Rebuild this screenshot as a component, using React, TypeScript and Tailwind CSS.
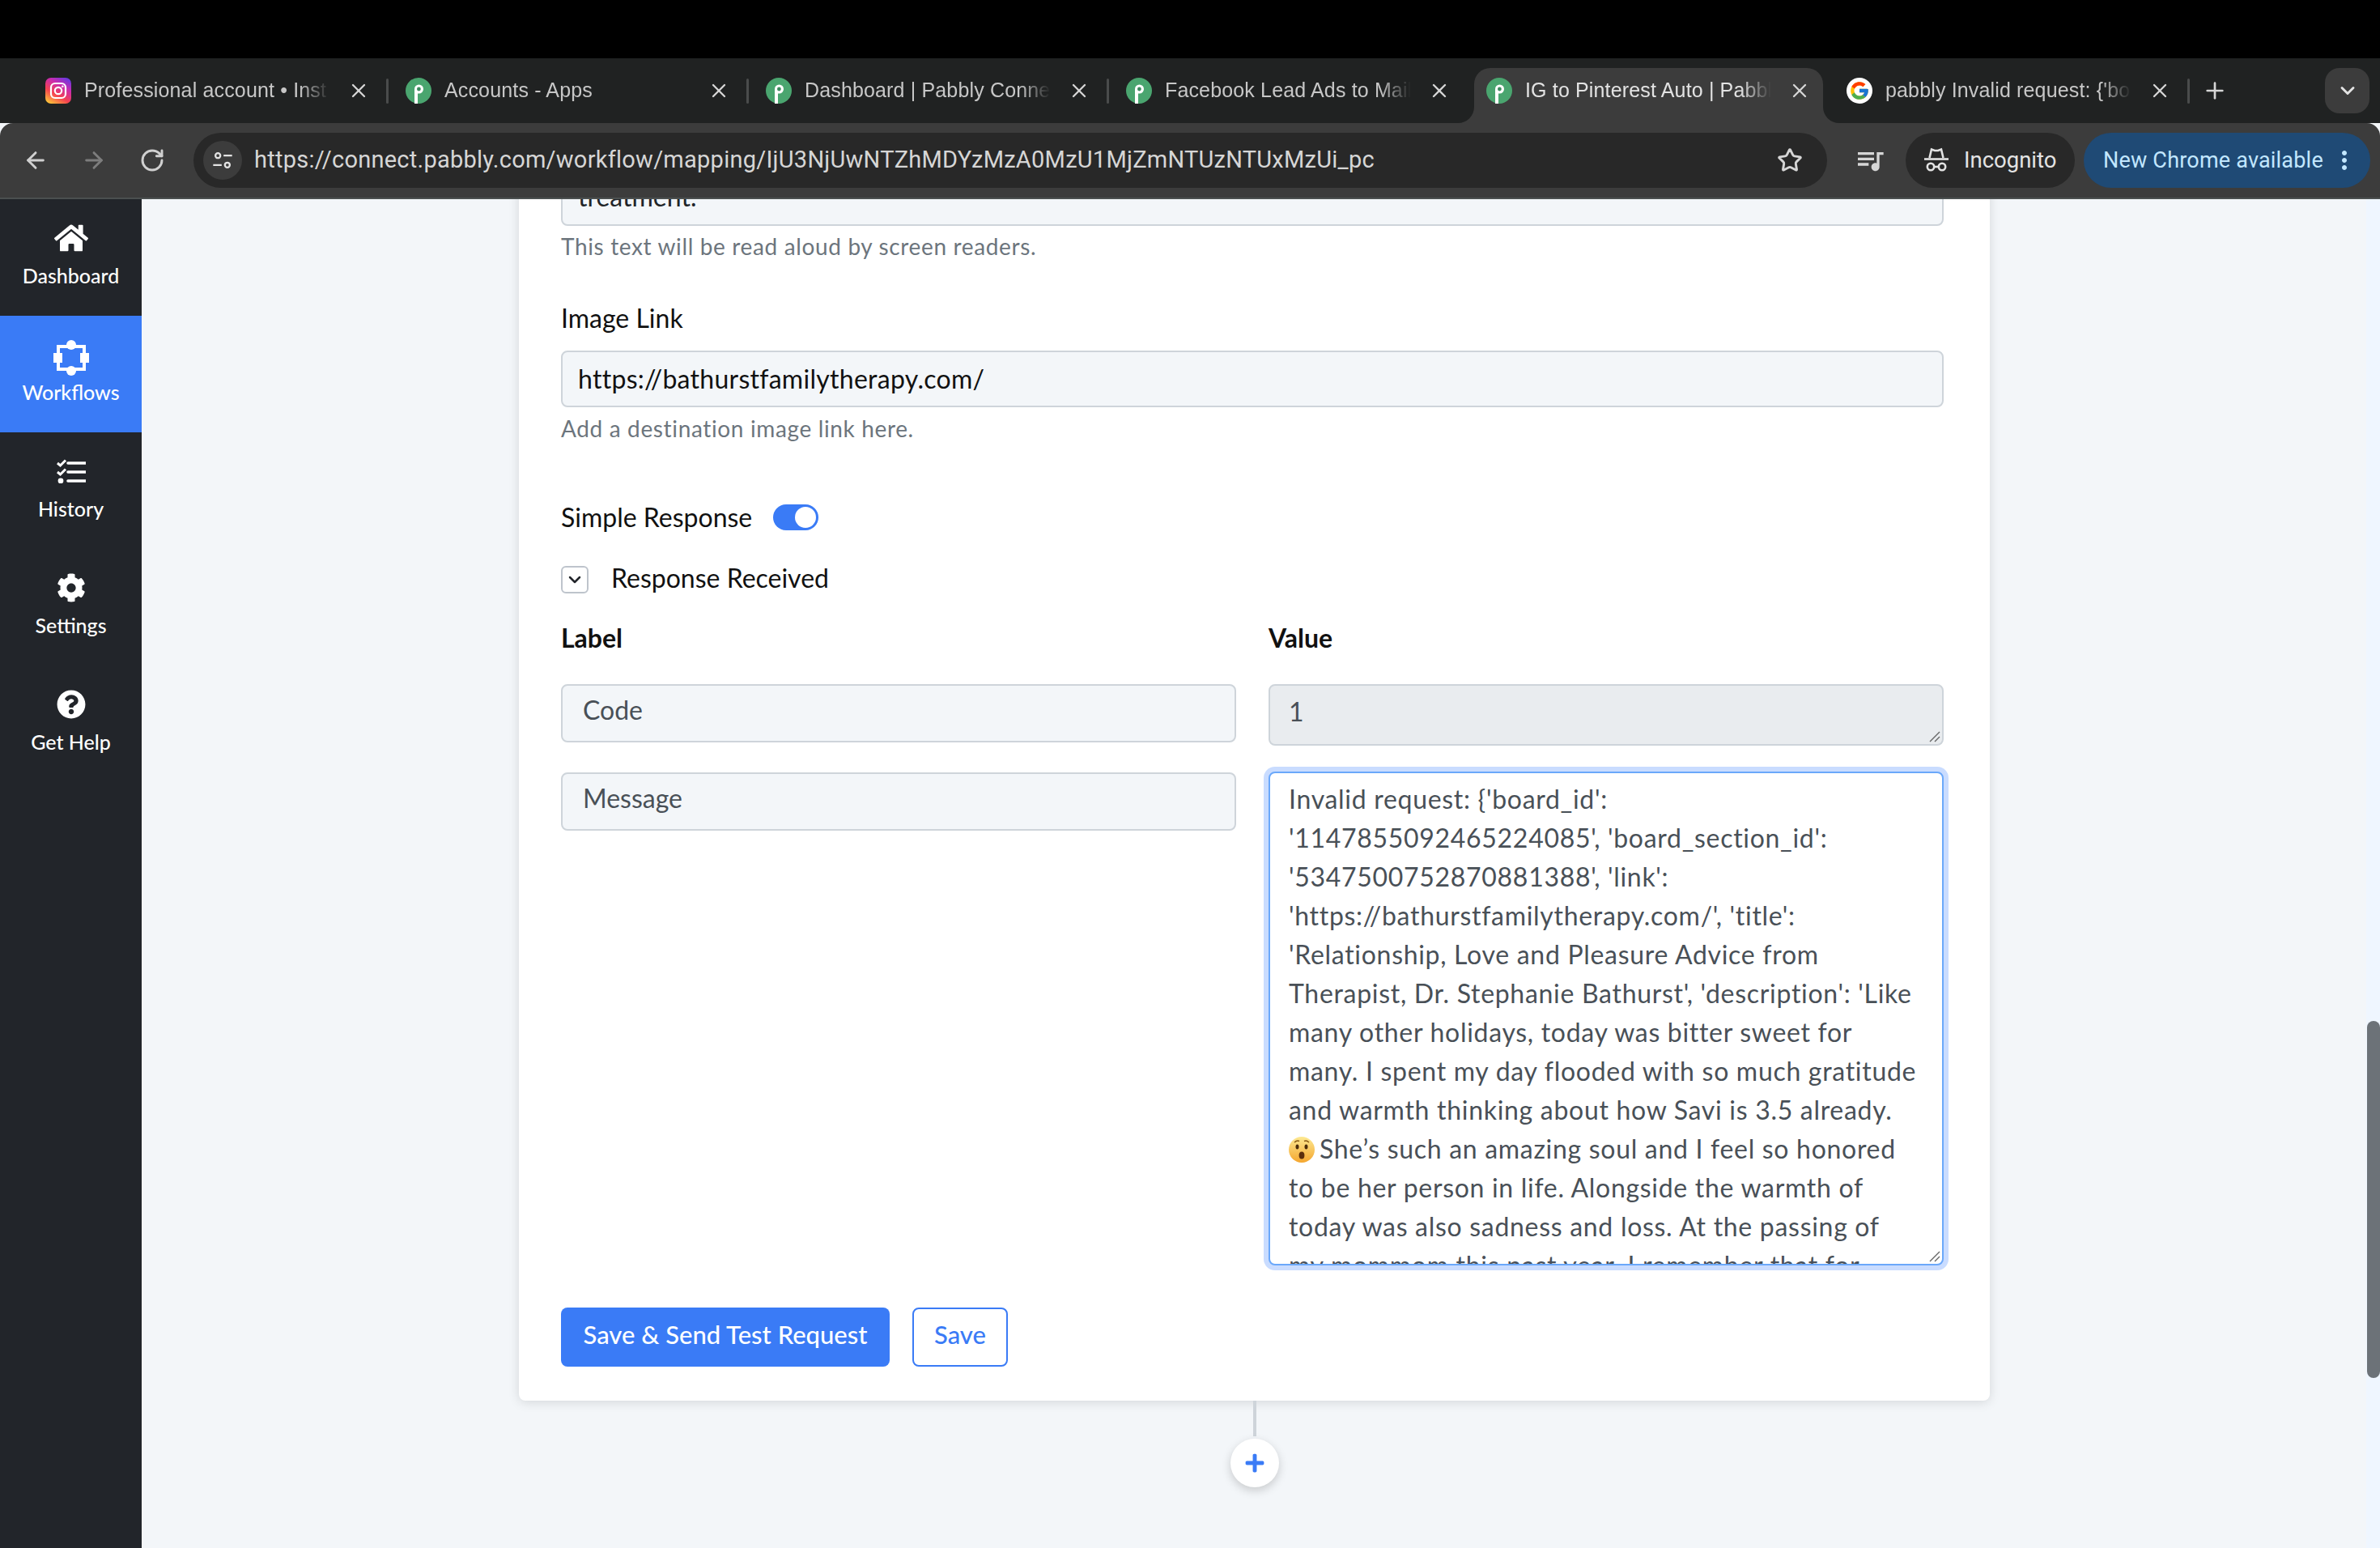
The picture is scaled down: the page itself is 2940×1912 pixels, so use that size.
import type React from "react";
import { ArrowLeft, ArrowRight, ChevronDown, Plus, RotateCw, Star, X } from "lucide-react";
import { FaCog, FaHome, FaPlus, FaQuestionCircle } from "react-icons/fa";
import { FcGoogle } from "react-icons/fc";
import { MdMoreVert, MdQueueMusic } from "react-icons/md";

const TABS = [
  { title: "Professional account • Inst", icon: "instagram", divider: true },
  { title: "Accounts - Apps", icon: "pabbly", divider: true },
  { title: "Dashboard | Pabbly Conne", icon: "pabbly", divider: true },
  { title: "Facebook Lead Ads to Mail", icon: "pabbly", divider: false },
  { title: "IG to Pinterest Auto | Pabbl", icon: "pabbly", divider: false, active: true },
  { title: "pabbly Invalid request: {'bo", icon: "google", divider: true },
];

const MESSAGE_LINES = [
  "Invalid request: {'board_id':",
  "'1147855092465224085', 'board_section_id':",
  "'5347500752870881388', 'link':",
  "'https://bathurstfamilytherapy.com/', 'title':",
  "'Relationship, Love and Pleasure Advice from",
  "Therapist, Dr. Stephanie Bathurst', 'description': 'Like",
  "many other holidays, today was bitter sweet for",
  "many. I spent my day flooded with so much gratitude",
  "and warmth thinking about how Savi is 3.5 already.",
  "EMOJI She’s such an amazing soul and I feel so honored",
  "to be her person in life. Alongside the warmth of",
  "today was also sadness and loss. At the passing of",
  "my mommom this past year. I remember that for",
];

function InstagramIcon() {
  return (
    <svg viewBox="0 0 32 32" className="w-8 h-8 shrink-0">
      <defs>
        <linearGradient id="ig" x1="0.2" y1="1" x2="0.8" y2="0">
          <stop offset="0" stopColor="#fdc13a" />
          <stop offset="0.35" stopColor="#f5424f" />
          <stop offset="0.7" stopColor="#c92bb0" />
          <stop offset="1" stopColor="#6a39e0" />
        </linearGradient>
      </defs>
      <rect width="32" height="32" rx="7" fill="url(#ig)" />
      <rect x="7" y="7" width="18" height="18" rx="5" fill="none" stroke="#fff" strokeWidth="2.2" />
      <circle cx="16" cy="16" r="4.2" fill="none" stroke="#fff" strokeWidth="2.2" />
      <circle cx="21.3" cy="10.7" r="1.3" fill="#fff" />
    </svg>
  );
}

function PabblyIcon() {
  return (
    <svg viewBox="0 0 32 32" className="w-8 h-8 shrink-0">
      <circle cx="16" cy="16" r="16" fill="#4aa56f" />
      <path d="M11 32V14a5.5 5.5 0 1 1 5.5 5.5H15V32z" fill="#fff" />
      <circle cx="16.4" cy="14" r="2.4" fill="#3e8c60" />
    </svg>
  );
}

function TabIcon({ name }: { name: string }) {
  if (name === "instagram") return <InstagramIcon />;
  if (name === "google") {
    return (
      <span className="w-8 h-8 shrink-0 rounded-full bg-white flex items-center justify-center">
        <FcGoogle className="w-[26px] h-[26px]" />
      </span>
    );
  }
  return <PabblyIcon />;
}

function BrowserTab({ tab }: { tab: (typeof TABS)[number] }) {
  return (
    <div className="relative w-[445px] h-[68px] shrink-0 flex items-start pt-3 pl-5 pr-6">
      {tab.active && (
        <>
          <div className="absolute left-[5px] right-[9px] top-0 bottom-0 bg-[#3c3c3c] rounded-t-[20px]" />
          <svg viewBox="0 0 20 20" className="absolute left-[-15px] bottom-0 w-5 h-5">
            <path d="M20 0v20H0A20 20 0 0 0 20 0z" fill="#3c3c3c" />
          </svg>
          <svg viewBox="0 0 20 20" className="absolute right-[-11px] bottom-0 w-5 h-5">
            <path d="M0 0v20h20A20 20 0 0 1 0 0z" fill="#3c3c3c" />
          </svg>
        </>
      )}
      <div className="relative flex items-center w-full h-8">
        <TabIcon name={tab.icon} />
        <span
          className={`ml-4 flex-1 overflow-hidden whitespace-nowrap text-[25px] tracking-[0.15px] [mask-image:linear-gradient(to_right,black_85%,transparent_97%)] ${
            tab.active ? "text-[#e3e3e3]" : "text-[#c7c7c7]"
          }`}
        >
          {tab.title}
        </span>
        <X className="ml-3 w-7 h-7 shrink-0 text-[#d6d6d6]" strokeWidth={2} />
      </div>
      {tab.divider && <div className="absolute right-[1px] top-[13px] w-[3px] h-[31px] rounded bg-[#4a4c4c]" />}
    </div>
  );
}

function TuneIcon() {
  return (
    <svg viewBox="0 0 24 24" className="w-7 h-7" fill="none" stroke="#e3e3e3" strokeWidth="2">
      <circle cx="7" cy="7" r="2.6" />
      <path d="M13 7h9M2 17h9" />
      <circle cx="17" cy="17" r="2.6" />
    </svg>
  );
}

function IncognitoIcon() {
  return (
    <svg viewBox="0 0 32 32" className="w-8 h-8 shrink-0" fill="none" stroke="#e3e3e3" strokeWidth="2.6">
      <path d="M1 14.5h30" />
      <path d="M7.5 13 10 2.5l4 1.5h4l4-1.5L24.5 13" />
      <circle cx="9" cy="24" r="4.2" />
      <circle cx="23" cy="24" r="4.2" />
      <path d="M13 24h6" />
    </svg>
  );
}

function BrowserChrome() {
  return (
    <div className="shrink-0">
      <div className="h-[72px] bg-black" />
      <div className="relative h-20 bg-[#202222] flex pt-3 pl-9">
        {TABS.map((tab) => (
          <BrowserTab key={tab.title} tab={tab} />
        ))}
        <Plus className="absolute left-[2720px] top-6 w-8 h-8 text-[#d6d6d6]" strokeWidth={2} />
        <div className="absolute left-[2872px] top-3 w-[55px] h-14 rounded-[18px] bg-[#3c3c3c] flex items-center justify-center">
          <ChevronDown className="w-7 h-7 text-[#e3e3e3]" strokeWidth={2.5} />
        </div>
      </div>
      <div className="relative h-[94px] bg-[#3c3c3c] rounded-t-[16px] border-b-2 border-[#4b5050] flex items-center pl-7 font-['Roboto',sans-serif]">
        <ArrowLeft className="w-8 h-8 text-[#d0d0d0]" strokeWidth={2.2} />
        <ArrowRight className="ml-10 w-8 h-8 text-[#7d7d7d]" strokeWidth={2.2} />
        <RotateCw className="ml-10 w-8 h-8 text-[#d0d0d0]" strokeWidth={2.2} />
        <div className="ml-[35px] w-[2018px] h-[68px] rounded-full bg-[#282828] flex items-center pl-3 pr-[30px]">
          <div className="w-[48px] h-[48px] rounded-full bg-[#3c3c3c] flex items-center justify-center">
            <TuneIcon />
          </div>
          <span className="ml-[15px] flex-1 text-[#d6d6d6] text-[29px] tracking-[0.25px] whitespace-nowrap">
            https://connect.pabbly.com/workflow/mapping/IjU3NjUwNTZhMDYzMzA0MzU1MjZmNTUzNTUxMzUi_pc
          </span>
          <Star className="w-8 h-8 text-[#d6d6d6]" strokeWidth={2.2} />
        </div>
        <MdQueueMusic className="ml-[33px] w-10 h-10 text-[#d6d6d6]" />
        <div className="ml-6 w-[209px] h-[68px] rounded-full bg-[#282828] flex items-center pl-[22px] gap-[18px]">
          <IncognitoIcon />
          <span className="text-[#e3e3e3] text-[27.5px]">Incognito</span>
        </div>
        <div className="ml-[11px] w-[354px] h-[68px] rounded-full bg-[#1f4a75] flex items-center pl-6 text-[#c2e7ff]">
          <span className="text-[27px] tracking-[0.2px] whitespace-nowrap">New Chrome available</span>
          <MdMoreVert className="ml-2 w-9 h-9" />
        </div>
      </div>
    </div>
  );
}

function WorkflowIcon() {
  return (
    <svg viewBox="0 0 44 44" className="w-[44px] h-[44px] mt-[9px]" fill="#fff">
      <path d="M6 8h32v28H6z" fill="none" stroke="#fff" strokeWidth="4" />
      <circle cx="22" cy="6" r="6" />
      <circle cx="22" cy="38" r="6" />
      <rect x="0" y="16" width="11" height="12" />
      <rect x="33" y="16" width="11" height="12" />
    </svg>
  );
}

function HistoryIcon() {
  return (
    <svg viewBox="0 0 36 30" className="w-9 h-[30px]" fill="none" stroke="#fff">
      <path d="M1 5l3.5 3L11 1.5M1 16l3.5 3L11 12.5" strokeWidth="3" />
      <circle cx="5" cy="27" r="3.4" fill="#fff" stroke="none" />
      <path d="M14 5h22M14 16h22M14 27h22" strokeWidth="3.6" strokeLinecap="round" />
    </svg>
  );
}

function SidebarItem({ label, icon, active }: { label: string; icon: React.ReactNode; active?: boolean }) {
  return (
    <div className={`h-[144px] flex flex-col items-center ${active ? "bg-[#3a7bf6]" : ""}`}>
      <div className="h-[94px] flex items-center justify-center pt-px">{icon}</div>
      <span className="text-white text-[25px] font-medium leading-none -mt-3">{label}</span>
    </div>
  );
}

function Sidebar() {
  return (
    <aside className="w-[175px] shrink-0 bg-[#22252a]">
      <SidebarItem label="Dashboard" icon={<FaHome className="w-[42px] h-[38px] text-white" />} />
      <SidebarItem label="Workflows" active icon={<WorkflowIcon />} />
      <SidebarItem label="History" icon={<HistoryIcon />} />
      <SidebarItem label="Settings" icon={<FaCog className="w-[36px] h-[36px] text-white" />} />
      <SidebarItem label="Get Help" icon={<FaQuestionCircle className="w-[36px] h-[36px] text-white" />} />
    </aside>
  );
}

function HelpText({ children, className }: { children: React.ReactNode; className?: string }) {
  return <p className={`h-12 leading-[48px] text-[#6c757d] text-[28px] tracking-[0.64px] ${className ?? ""}`}>{children}</p>;
}

function FieldLabel({ children, className }: { children: React.ReactNode; className?: string }) {
  return <div className={`h-12 leading-[48px] text-[#111] text-[32px] ${className ?? ""}`}>{children}</div>;
}

function ResizeGrip() {
  return (
    <svg viewBox="0 0 14 14" className="absolute right-[2px] bottom-[2px] w-[14px] h-[14px]" stroke="#666" strokeWidth="1.4">
      <path d="M1 13 13 1M7 13l6-6" />
    </svg>
  );
}

function ShockedEmoji() {
  return (
    <svg viewBox="0 0 32 32" className="inline-block w-8 h-[34px] align-[-6px] mr-[6px]">
      <defs>
        <linearGradient id="face" x1="0" y1="0" x2="0" y2="1">
          <stop offset="0" stopColor="#fde992" />
          <stop offset="1" stopColor="#f4a62e" />
        </linearGradient>
      </defs>
      <circle cx="16" cy="16" r="16" fill="url(#face)" />
      <ellipse cx="10.5" cy="12.5" rx="2" ry="3" fill="#4a2c0a" />
      <ellipse cx="21.5" cy="12.5" rx="2" ry="3" fill="#4a2c0a" />
      <path d="M7 7q3-3 6-1.5M25 7q-3-3-6-1.5" stroke="#8a5a14" strokeWidth="1.4" fill="none" />
      <ellipse cx="16" cy="23" rx="3.4" ry="4.6" fill="#5b2e0c" />
    </svg>
  );
}

function ResponseFields() {
  return (
    <div className="mt-[33px] grid grid-cols-2 gap-x-10 gap-y-8 items-start text-[32px]">
      <div className="h-[72px] rounded-lg border-2 border-[#ced4da] bg-[#f3f6f9] pl-[25px] leading-[60px] text-[#495057]">
        Code
      </div>
      <div className="relative h-[76px] rounded-lg border-2 border-[#ced4da] bg-[#e9ecef] pl-[23px] leading-[63px] text-[#495057]">
        1
        <ResizeGrip />
      </div>
      <div className="mt-px h-[72px] rounded-lg border-2 border-[#ced4da] bg-[#f3f6f9] pl-[25px] leading-[60px] text-[#495057]">
        Message
      </div>
      <div className="relative h-[610px] rounded-lg border-2 border-[#6aa8fa] bg-white shadow-[0_0_0_6px_#c9dcff]">
        <div className="h-full overflow-hidden pt-2 pl-[23px] text-[#495057] leading-[48px] tracking-[0.7px]">
          {MESSAGE_LINES.map((line) => (
            <div key={line} className="whitespace-nowrap">
              {line.startsWith("EMOJI") ? (
                <>
                  <ShockedEmoji />
                  {line.replace("EMOJI ", "")}
                </>
              ) : (
                line
              )}
            </div>
          ))}
        </div>
        <ResizeGrip />
      </div>
    </div>
  );
}

function MappingCard() {
  return (
    <section className="w-[1817px] -mt-[60px] rounded-b-lg bg-white pl-[52px] pr-[57px] pb-[42px] shadow-[0_2px_14px_rgba(0,0,0,0.13)]">
      <div className="h-[93px] rounded-lg border-2 border-[#ced4da] bg-[#f3f6f9] pl-[19px] flex items-end pb-[10px] text-[32px] text-[#212529] leading-[48px]">
        treatment:
      </div>
      <HelpText className="mt-px">This text will be read aloud by screen readers.</HelpText>
      <FieldLabel className="mt-[41px]">Image Link</FieldLabel>
      <div className="mt-4 h-[70px] rounded-lg border-2 border-[#ced4da] bg-[#f3f6f9] pl-[19px] leading-[66px] text-[32px] tracking-[0.28px] text-[#111]">
        https://bathurstfamilytherapy.com/
      </div>
      <HelpText className="mt-[2px]">Add a destination image link here.</HelpText>
      <div className="mt-[62px] flex items-center h-12">
        <FieldLabel>Simple Response</FieldLabel>
        <div className="ml-[26px] w-14 h-8 rounded-full bg-[#3a7bf6] flex items-center justify-end pr-[3px]">
          <div className="w-[26px] h-[26px] rounded-full bg-white" />
        </div>
      </div>
      <div className="mt-[27px] flex items-center h-12">
        <div className="mt-[3px] w-[34px] h-[34px] rounded-md border-2 border-[#bec4cc] flex items-center justify-center">
          <ChevronDown className="w-6 h-6 text-[#22252a]" strokeWidth={2.5} />
        </div>
        <FieldLabel className="ml-7">Response Received</FieldLabel>
      </div>
      <div className="mt-[26px] grid grid-cols-2 gap-x-10 font-bold">
        <FieldLabel>Label</FieldLabel>
        <FieldLabel>Value</FieldLabel>
      </div>
      <ResponseFields />
      <div className="mt-[52px] flex gap-[28px] text-[31px]">
        <button type="button" className="w-[406px] h-[73px] pb-[6px] rounded-lg bg-[#3a7bf6] text-white font-medium">
          Save &amp; Send Test Request
        </button>
        <button type="button" className="w-[118px] h-[73px] pb-[6px] rounded-lg border-2 border-[#3a7bf6] text-[#3a7bf6] font-medium">
          Save
        </button>
      </div>
    </section>
  );
}

export default function App() {
  return (
    <div className="w-[2940px] h-[1912px] flex flex-col overflow-hidden bg-[#f3f6f9] font-['Liberation_Sans',sans-serif]">
      <BrowserChrome />
      <div className="flex-1 flex min-h-0 font-['Lato',sans-serif]">
        <Sidebar />
        <main className="relative flex-1 overflow-hidden pl-[466px]">
          <MappingCard />
          <div className="w-[1817px] flex flex-col items-center">
            <div className="w-1 h-[44px] bg-[#ced4da]" />
            <div className="mt-[3px] w-[60px] h-[60px] rounded-full bg-white shadow-[0_4px_12px_rgba(0,0,0,0.18)] flex items-center justify-center">
              <FaPlus className="w-[26px] h-[26px] text-[#3a7bf6]" />
            </div>
          </div>
          <div className="absolute right-0 top-0 bottom-0 w-[17px] bg-[#eff6ff]">
            <div className="absolute left-px top-[1015px] w-4 h-[441px] rounded-full bg-[#6c7278]" />
          </div>
        </main>
      </div>
    </div>
  );
}
